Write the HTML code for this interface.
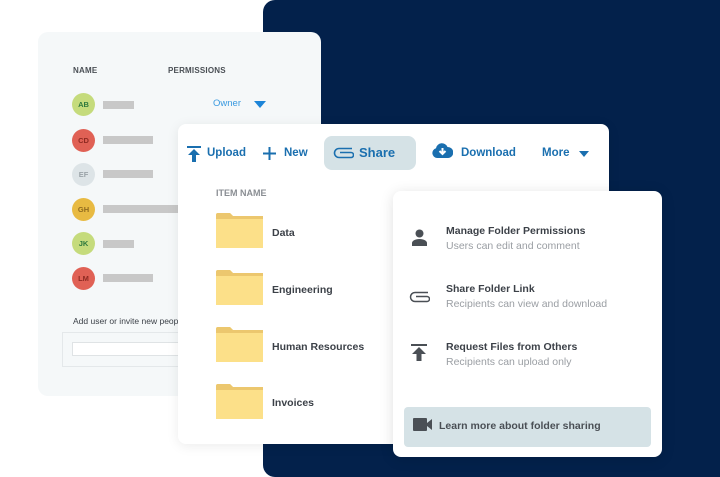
<!DOCTYPE html>
<html style="overflow:hidden;width:720px;height:477px"><head><style>
*{margin:0;padding:0;box-sizing:border-box}
body{width:720px;height:477px;background:#fff;position:relative;overflow:hidden;font-family:"Liberation Sans",sans-serif}
.abs{position:absolute}
.navy{left:263px;top:0;width:457px;height:477px;background:#03214b;border-radius:12px 0 0 12px}
.left{left:38px;top:32px;width:283px;height:364px;background:#f5f8f9;border-radius:10px}
.hd{font-size:8px;font-weight:bold;color:#4a4f55;letter-spacing:.2px}
.av{width:23px;height:23px;border-radius:50%;font-size:7.5px;font-weight:bold;text-align:center;line-height:23px}
.bar{height:8px;background:#c8c8c8}
.main{left:178px;top:124px;width:431px;height:320px;background:#fff;border-radius:8px;box-shadow:0 2px 12px rgba(0,0,0,.08)}
.tb{font-size:11.5px;font-weight:bold;color:#1a6faf}
.fold{width:47px;height:35px}
.fn{font-size:10.5px;color:#3c4148;font-weight:bold}
.pop{left:393px;top:191px;width:269px;height:266px;background:#fff;border-radius:8px;box-shadow:0 2px 14px rgba(0,0,0,.12)}
.t1{font-size:10.5px;font-weight:bold;color:#3c4148}
.t2{font-size:10.5px;color:#9a9ea3;margin-top:3px}
</style></head><body>
<div class="abs navy"></div>
<div class="abs left">
 <div class="abs hd" style="left:35px;top:34px">NAME</div>
 <div class="abs hd" style="left:130px;top:34px">PERMISSIONS</div>
 <div class="abs" style="left:175px;top:66px;font-size:9.5px;color:#3a9ae0">Owner</div>
 <div class="abs" style="left:216px;top:69px;width:0;height:0;border-left:6px solid transparent;border-right:6px solid transparent;border-top:7px solid #1d85d8"></div>
 <div class="abs av" style="left:34px;top:61px;background:#c5db7c;color:#2f7a3e">AB</div><div class="abs bar" style="left:65px;top:69px;width:31px"></div>
 <div class="abs av" style="left:34px;top:97px;background:#e06155;color:#8e2a22">CD</div><div class="abs bar" style="left:65px;top:104px;width:50px"></div>
 <div class="abs av" style="left:34px;top:131px;background:#dde4e7;color:#9aa3a8">EF</div><div class="abs bar" style="left:65px;top:138px;width:50px"></div>
 <div class="abs av" style="left:34px;top:166px;background:#e8ba42;color:#8f6a1f">GH</div><div class="abs bar" style="left:65px;top:173px;width:80px"></div>
 <div class="abs av" style="left:34px;top:200px;background:#c5db7c;color:#2f7a3e">JK</div><div class="abs bar" style="left:65px;top:208px;width:31px"></div>
 <div class="abs av" style="left:34px;top:235px;background:#e06155;color:#8e2a22">LM</div><div class="abs bar" style="left:65px;top:242px;width:50px"></div>
 <div class="abs" style="left:35px;top:284px;font-size:8.5px;color:#3c4148;white-space:nowrap">Add user or invite new people</div>
 <div class="abs" style="left:24px;top:300px;width:150px;height:35px;border:1px solid #e4e8ea"></div>
 <div class="abs" style="left:34px;top:310px;width:120px;height:14px;border:1px solid #dfe3e5;background:#fff"></div>
</div>
<div class="abs main">
 <svg class="abs" style="left:9px;top:22px" width="14" height="16" viewBox="0 0 14 16"><rect x="0" y="0" width="14" height="2" fill="#1a6faf"/><path d="M7 3L1 9h4v7h4V9h4z" fill="#1a6faf"/></svg>
 <div class="abs tb" style="left:29px;top:23px">Upload</div>
 <svg class="abs" style="left:85px;top:23px" width="13" height="13"><path d="M6.5 0v13M0 6.5h13" stroke="#1a6faf" stroke-width="2"/></svg>
 <div class="abs tb" style="left:106px;top:23px">New</div>
 <div class="abs" style="left:146px;top:12px;width:92px;height:34px;background:#d5e2e6;border-radius:8px"></div>
 <svg class="abs" style="left:155px;top:22px" width="21" height="14" viewBox="0 0 21 14"><path d="M19 2.5H6a4.5 4.5 0 0 0 0 9h12a2.5 2.5 0 0 0 0-5H7" fill="none" stroke="#1a6faf" stroke-width="1.6"/></svg>
 <div class="abs" style="left:181px;top:21px;font-size:13px;font-weight:bold;color:#1a6faf">Share</div>
 <svg class="abs" style="left:254px;top:19px" width="21" height="16" viewBox="0 0 21 16"><path d="M5 15a5 5 0 0 1-1-9.8A6 6 0 0 1 15.5 4 5.5 5.5 0 0 1 16 15z" fill="#1a6faf"/><path d="M10.5 5v5M7.5 8l3 3 3-3" stroke="#fff" stroke-width="2" fill="none"/></svg>
 <div class="abs tb" style="left:283px;top:23px">Download</div>
 <div class="abs tb" style="left:364px;top:23px">More</div>
 <div class="abs" style="left:401px;top:27px;border-left:5px solid transparent;border-right:5px solid transparent;border-top:6px solid #1a6faf"></div>
 <div class="abs" style="left:38px;top:64px;font-size:9px;font-weight:bold;color:#8a8e93">ITEM NAME</div>
 <svg class="abs fold" style="left:38px;top:89px"><path d="M0 2a2 2 0 0 1 2-2h12l3 3h30v32H0z" fill="#fce089"/><path d="M0 2a2 2 0 0 1 2-2h12l3 3h30v3H0z" fill="#ecc76e"/></svg>
 <div class="abs fn" style="left:94px;top:103px">Data</div>
 <svg class="abs fold" style="left:38px;top:146px"><path d="M0 2a2 2 0 0 1 2-2h12l3 3h30v32H0z" fill="#fce089"/><path d="M0 2a2 2 0 0 1 2-2h12l3 3h30v3H0z" fill="#ecc76e"/></svg>
 <div class="abs fn" style="left:94px;top:160px">Engineering</div>
 <svg class="abs fold" style="left:38px;top:203px"><path d="M0 2a2 2 0 0 1 2-2h12l3 3h30v32H0z" fill="#fce089"/><path d="M0 2a2 2 0 0 1 2-2h12l3 3h30v3H0z" fill="#ecc76e"/></svg>
 <div class="abs fn" style="left:94px;top:217px">Human Resources</div>
 <svg class="abs fold" style="left:38px;top:260px"><path d="M0 2a2 2 0 0 1 2-2h12l3 3h30v32H0z" fill="#fce089"/><path d="M0 2a2 2 0 0 1 2-2h12l3 3h30v3H0z" fill="#ecc76e"/></svg>
 <div class="abs fn" style="left:94px;top:273px">Invoices</div>
</div>
<div class="abs pop">
 <svg class="abs" style="left:18px;top:38px" width="17" height="17" viewBox="0 0 17 17"><circle cx="8.5" cy="4.5" r="4" fill="#4a4f55"/><path d="M1 17v-3c0-2 3-4 7.5-4s7.5 2 7.5 4v3z" fill="#4a4f55"/></svg>
 <div class="abs" style="left:53px;top:34px"><div class="t1">Manage Folder Permissions</div><div class="t2">Users can edit and comment</div></div>
 <svg class="abs" style="left:16px;top:99px" width="21" height="14" viewBox="0 0 21 14"><path d="M19 2.5H6a4.5 4.5 0 0 0 0 9h12a2.5 2.5 0 0 0 0-5H7" fill="none" stroke="#4a4f55" stroke-width="1.5"/></svg>
 <div class="abs" style="left:53px;top:92px"><div class="t1">Share Folder Link</div><div class="t2">Recipients can view and download</div></div>
 <svg class="abs" style="left:18px;top:153px" width="16" height="17" viewBox="0 0 16 17"><rect x="0" y="0" width="16" height="2" fill="#4a4f55"/><path d="M8 3L1 10h4.5v7h5v-7H15z" fill="#4a4f55"/></svg>
 <div class="abs" style="left:53px;top:150px"><div class="t1">Request Files from Others</div><div class="t2">Recipients can upload only</div></div>
 <div class="abs" style="left:11px;top:216px;width:247px;height:40px;background:#d5e2e6;border-radius:4px"></div>
 <svg class="abs" style="left:20px;top:227px" width="19" height="13" viewBox="0 0 19 13"><rect x="0" y="0" width="14" height="13" rx="1" fill="#4a4f55"/><path d="M14 5l5-4v11l-5-4z" fill="#4a4f55"/></svg>
 <div class="abs" style="left:46px;top:229px;font-size:10.5px;font-weight:bold;color:#4a4f55">Learn more about folder sharing</div>
</div>
</body></html>
